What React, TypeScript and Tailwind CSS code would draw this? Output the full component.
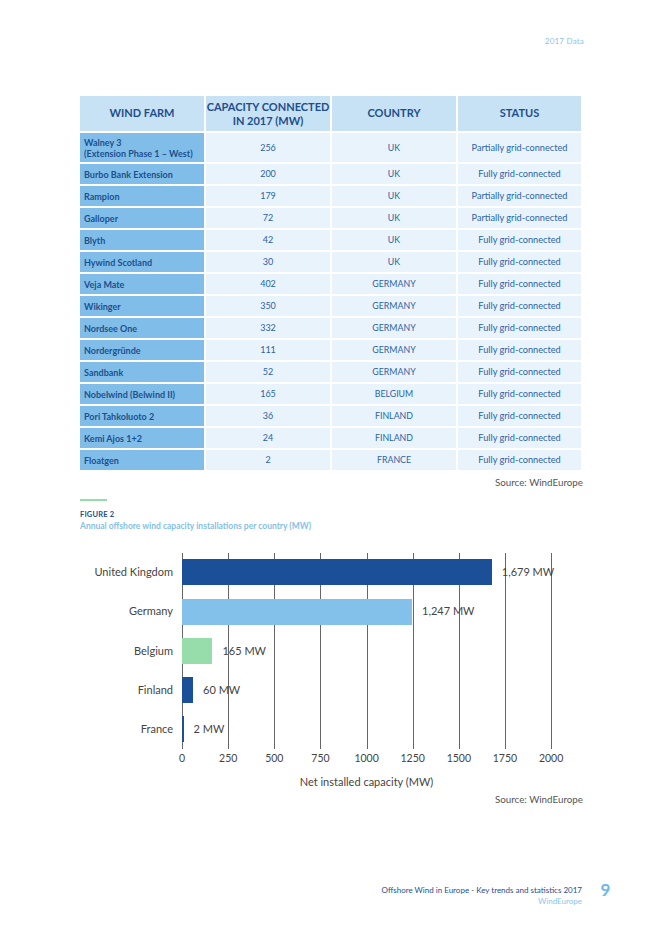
const rows: [string, string, string, string][] = [
  ["Walney 3\n(Extension Phase 1 – West)", "256", "UK", "Partially grid-connected"],
  ["Burbo Bank Extension", "200", "UK", "Fully grid-connected"],
  ["Rampion", "179", "UK", "Partially grid-connected"],
  ["Galloper", "72", "UK", "Partially grid-connected"],
  ["Blyth", "42", "UK", "Fully grid-connected"],
  ["Hywind Scotland", "30", "UK", "Fully grid-connected"],
  ["Veja Mate", "402", "GERMANY", "Fully grid-connected"],
  ["Wikinger", "350", "GERMANY", "Fully grid-connected"],
  ["Nordsee One", "332", "GERMANY", "Fully grid-connected"],
  ["Nordergründe", "111", "GERMANY", "Fully grid-connected"],
  ["Sandbank", "52", "GERMANY", "Fully grid-connected"],
  ["Nobelwind (Belwind II)", "165", "BELGIUM", "Fully grid-connected"],
  ["Pori Tahkoluoto 2", "36", "FINLAND", "Fully grid-connected"],
  ["Kemi Ajos 1+2", "24", "FINLAND", "Fully grid-connected"],
  ["Floatgen", "2", "FRANCE", "Fully grid-connected"],
];

const bars = [
  { name: "United Kingdom", value: 1679, label: "1,679 MW", color: "#1b4f97" },
  { name: "Germany", value: 1247, label: "1,247 MW", color: "#83c0ea" },
  { name: "Belgium", value: 165, label: "165 MW", color: "#97dcab" },
  { name: "Finland", value: 60, label: "60 MW", color: "#1b4f97" },
  { name: "France", value: 2, label: "2 MW", color: "#1b4f97" },
];

const ticks = [0, 250, 500, 750, 1000, 1250, 1500, 1750, 2000];
const PX = 369 / 2000;

export default function App() {
  return (
    <div className="w-[662px] h-[936px] bg-white flex flex-col px-[80px] font-['Lato',sans-serif]">
      <div className="pt-[35px] h-[96px] text-right -mr-[2px] text-[8px] text-[#8cc4ea] tracking-wide">2017 Data</div>

      {/* table */}
      <div className="grid grid-cols-[124px_124px_124px_123px] gap-[2px] w-[501px] text-[#1e4f8c]">
        <div className="h-[35px] bg-[#c7e1f5] flex items-center justify-center font-bold text-[11px]">WIND FARM</div>
        <div className="h-[35px] bg-[#c7e1f5] flex items-center justify-center text-center font-bold text-[11px] leading-[14px]">CAPACITY CONNECTED<br />IN 2017 (MW)</div>
        <div className="h-[35px] bg-[#c7e1f5] flex items-center justify-center font-bold text-[11px]">COUNTRY</div>
        <div className="h-[35px] bg-[#c7e1f5] flex items-center justify-center font-bold text-[11px]">STATUS</div>
        {rows.map((r, i) => (
          <>
            <div key={"a" + i} className={`${i === 0 ? "h-[29px]" : "h-[20px]"} bg-[#80bee9] flex items-center px-[4px] font-bold text-[9px] leading-[11px] whitespace-pre-line`}>{r[0]}</div>
            <div key={"b" + i} className="bg-[#e9f3fb] flex items-center justify-center text-[9px] text-[#2a63a8]">{r[1]}</div>
            <div key={"c" + i} className="bg-[#e9f3fb] flex items-center justify-center text-[8.8px] text-[#2a63a8]">{r[2]}</div>
            <div key={"d" + i} className="bg-[#e9f3fb] flex items-center justify-center text-[9.2px] text-[#2a63a8]">{r[3]}</div>
          </>
        ))}
      </div>
      <div className="mt-[5px] text-right text-[9.8px] text-[#555] -mr-[1px]">Source: WindEurope</div>

      {/* figure */}
      <div className="mt-[9px] w-[27px] h-[2px] bg-[#97dcab]" />
      <div className="mt-[9px] text-[7.5px] font-bold text-[#1e4f8c] tracking-wide leading-[10px]">FIGURE 2</div>
      <div className="text-[8.5px] font-bold text-[#86c0e6] leading-[12px]">Annual offshore wind capacity installations per country (MW)</div>

      <div className="mt-[21px] flex">
        <div className="w-[102px] flex flex-col pr-[9px]">
          {bars.map((b) => (
            <div key={b.name} className="h-[39.25px] flex items-center justify-end text-[11px] text-[#444]">{b.name}</div>
          ))}
        </div>
        <div className="relative w-[369px] h-[196px]">
          {ticks.map((t) => (
            <div key={t} className="absolute top-0 bottom-0 w-px bg-[#666]" style={{ left: t * PX }} />
          ))}
          {bars.map((b) => (
            <div key={b.name} className="relative h-[39.25px] flex items-center">
              <div className="h-[26px] shrink-0" style={{ width: Math.max(b.value * PX, 1.5), backgroundColor: b.color }} />
              <div className="ml-[10px] text-[11px] text-[#444] whitespace-nowrap">{b.label}</div>
            </div>
          ))}
        </div>
      </div>
      <div className="ml-[79px] mt-[2px] grid grid-cols-[repeat(9,46.125px)] text-[10.5px] text-[#444]">
        {ticks.map((t) => (
          <div key={t} className="text-center">{t}</div>
        ))}
      </div>
      <div className="ml-[102px] w-[369px] mt-[7px] text-center text-[11px] text-[#444]">Net installed capacity (MW)</div>
      <div className="mt-[2px] text-right text-[9.8px] text-[#555] -mr-[1px]">Source: WindEurope</div>

      {/* footer */}
      <div className="mt-[76px] flex items-start justify-end -mr-[30px]">
        <div className="text-right leading-[11px] pt-[2px]">
          <div className="text-[8px] text-[#1e4f8c]">Offshore Wind in Europe - Key trends and statistics 2017</div>
          <div className="text-[8px] text-[#8cc4ea]">WindEurope</div>
        </div>
        <div className="ml-[17px] w-[13px] text-center text-[17px] font-bold text-[#6db8e8] leading-[20px] -mt-[3px]">9</div>
      </div>
    </div>
  );
}
